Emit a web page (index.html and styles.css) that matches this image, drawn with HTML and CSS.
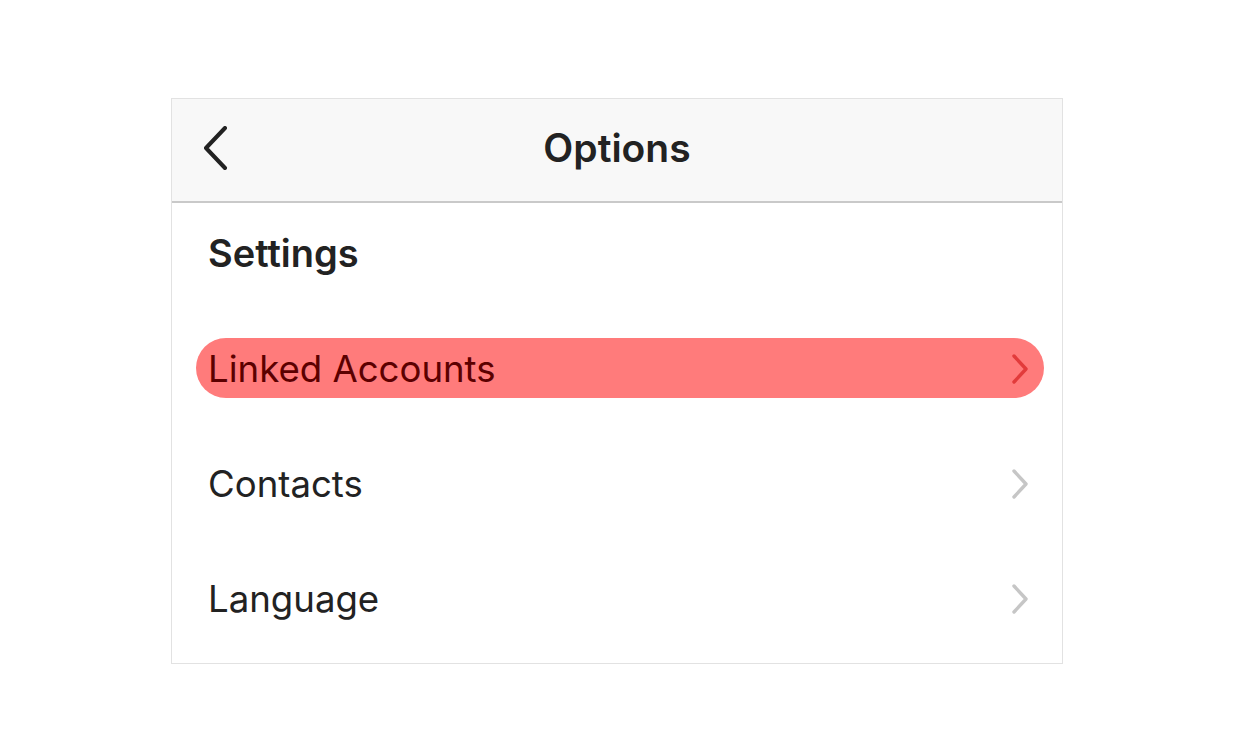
FILE: index.html
```html
<!DOCTYPE html>
<html>
<head>
<meta charset="utf-8">
<link rel="stylesheet" href="styles.css">
</head>
<body>
<div class="card">
  <div class="header">
    <svg class="back" width="28" height="44" viewBox="0 0 28 44"><path d="M24 2 L5 22 L24 42" fill="none" stroke="#222" stroke-width="4" stroke-linecap="round" stroke-linejoin="round"/></svg>
    <div class="title">Options</div>
  </div>
  <div class="section">Settings</div>
  <div class="list">
    <div class="row active"><span class="label">Linked Accounts</span><svg class="chev" width="18" height="32" viewBox="0 0 18 32"><path d="M3 3 L15 16 L3 29" fill="none" stroke="#e23b3b" stroke-width="3.4" stroke-linecap="round" stroke-linejoin="round"/></svg></div>
    <div class="row"><span class="label">Contacts</span><svg class="chev" width="18" height="32" viewBox="0 0 18 32"><path d="M3 3 L15 16 L3 29" fill="none" stroke="#c6c6c6" stroke-width="3.4" stroke-linecap="round" stroke-linejoin="round"/></svg></div>
    <div class="row"><span class="label">Language</span><svg class="chev" width="18" height="32" viewBox="0 0 18 32"><path d="M3 3 L15 16 L3 29" fill="none" stroke="#c6c6c6" stroke-width="3.4" stroke-linecap="round" stroke-linejoin="round"/></svg></div>
  </div>
</div>
</body>
</html>
```
FILE: styles.css
```css
* { box-sizing: border-box; }
body {
  margin: 0;
  padding: 98px 0 0 171px;
  background: #fff;
  font-family: "Inter", "Open Sans", sans-serif;
  color: #222;
}
.card {
  width: 892px;
  height: 566px;
  border: 1px solid #e2e2e2;
  background: #fff;
}
.header {
  height: 104px;
  background: #f8f8f8;
  border-bottom: 2px solid #c9c9c9;
  display: flex;
  align-items: center;
  justify-content: center;
  position: relative;
}
.back {
  position: absolute;
  left: 29px;
  top: 27px;
}
.title {
  font-size: 39px;
  font-weight: 600;
  color: #222;
  margin-bottom: 5px;
}
.section {
  height: 100px;
  display: flex;
  align-items: center;
  padding-left: 36px;
  font-size: 38px;
  font-weight: 600;
}
.list {
  padding-top: 8px;
}
.row {
  height: 115px;
  display: flex;
  align-items: center;
  justify-content: space-between;
  padding: 0 33px 0 36px;
  font-size: 36.6px;
  position: relative;
}
.row.active {
  color: #5c0000;
}
.row.active::before {
  content: "";
  position: absolute;
  left: 24px;
  right: 18px;
  top: 27px;
  height: 60px;
  border-radius: 30px;
  background: #ff7b7b;
  z-index: 0;
}
.label, .chev { position: relative; z-index: 1; }
```
